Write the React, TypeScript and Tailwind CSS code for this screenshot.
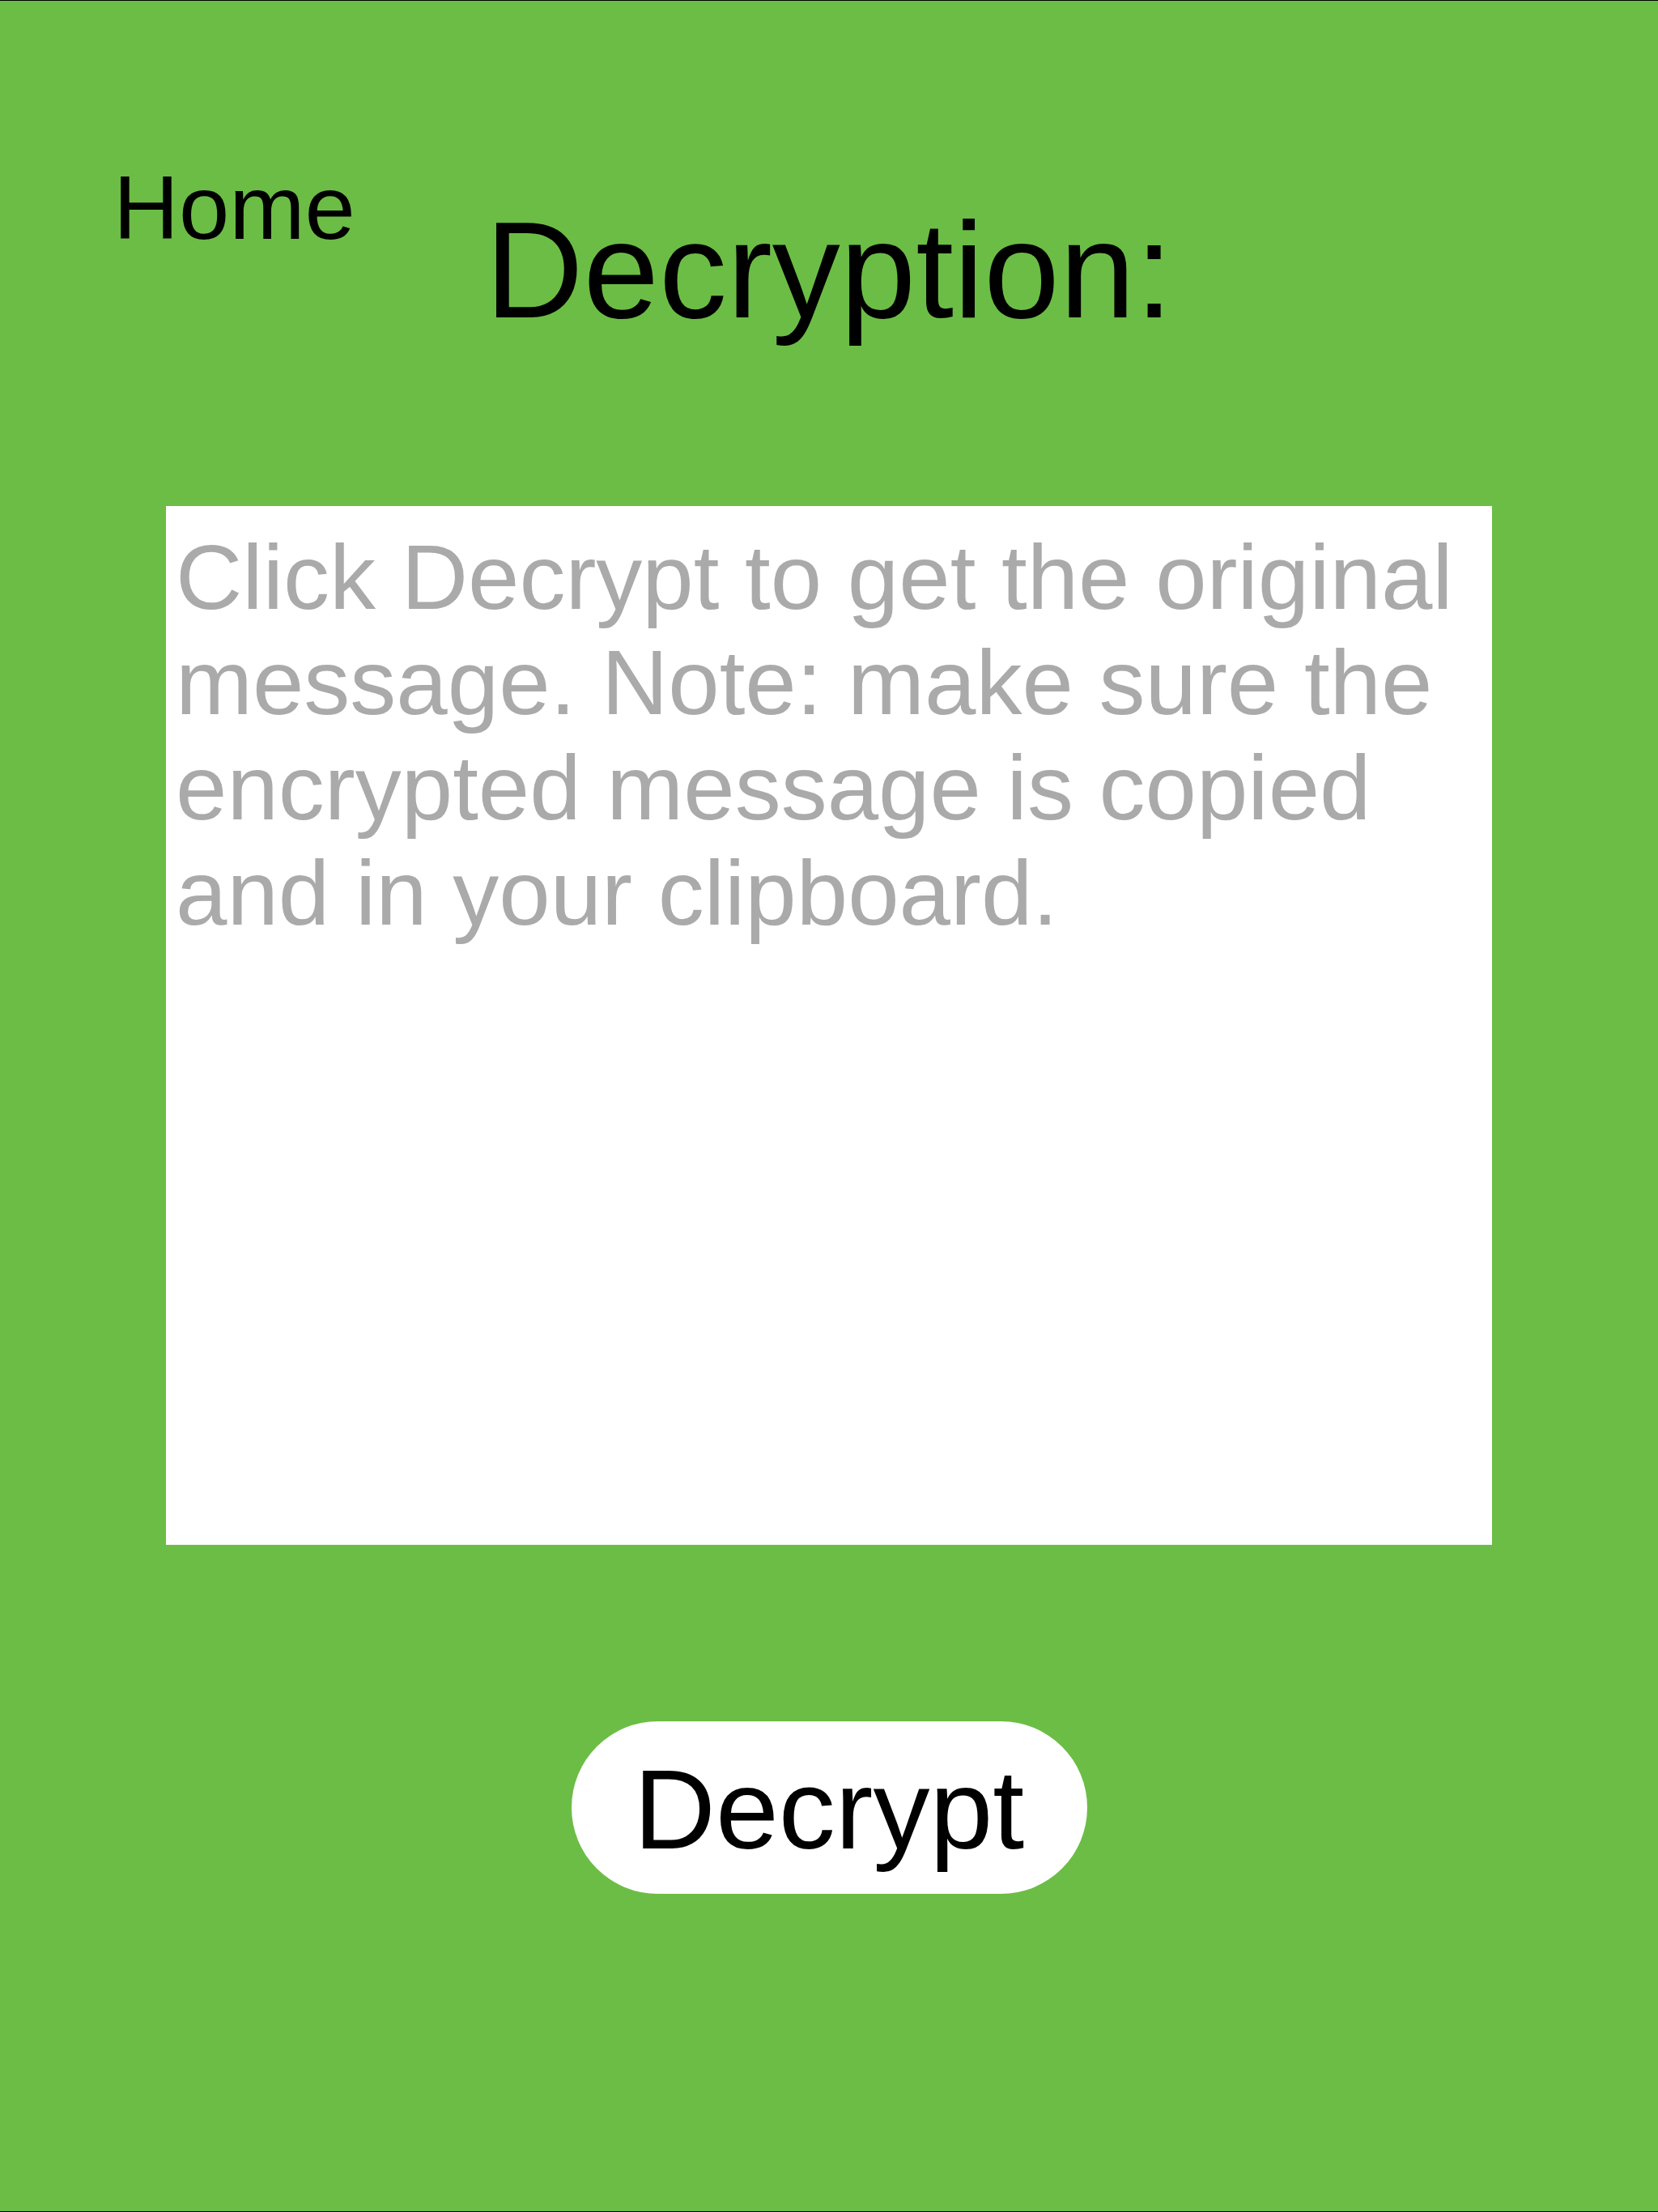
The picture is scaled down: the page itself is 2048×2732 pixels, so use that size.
import React from "react";

export default function App() {
  return (
    <div
      className="w-full min-h-[2732px] bg-[#6cbd45] border-t border-b border-black flex flex-col text-black"
      style={{ fontFamily: '"Liberation Sans", Arial, Helvetica, sans-serif' }}
    >
      <header className="grid grid-cols-[1fr_auto_1fr] pt-[200px]">
        <div className="pl-[140px]">
          <a href="#" className="block text-[112px] leading-none text-black">
            Home
          </a>
        </div>
        <h1 className="mt-[49px] text-[168px] leading-none font-normal">Decryption:</h1>
        <div />
      </header>

      <div className="mt-[207px] flex justify-center">
        <textarea
          className="w-[1638px] h-[1283px] bg-white resize-none outline-none border-0 pt-[23px] px-[12px] text-[114px] leading-[130px] text-black placeholder:text-[#aaaaaa]"
          style={{ fontFamily: '"Liberation Sans", Arial, Helvetica, sans-serif' }}
          placeholder="Click Decrypt to get the original message. Note: make sure the encrypted message is copied and in your clipboard."
        />
      </div>

      <div className="mt-[218px] flex justify-center">
        <button
          className="w-[637px] h-[213px] rounded-full bg-white flex items-center justify-center pt-[4px] text-[140px] leading-none text-black"
          style={{ fontFamily: '"Liberation Sans", Arial, Helvetica, sans-serif' }}
        >
          Decrypt
        </button>
      </div>
    </div>
  );
}
